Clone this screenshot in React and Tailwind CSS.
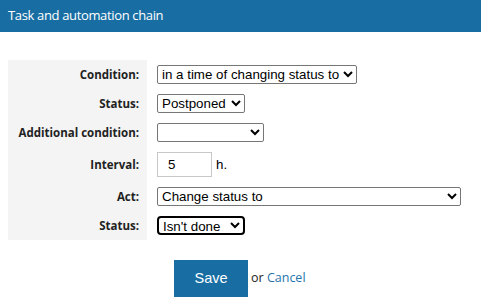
import React from 'react';

const rows = [
  { label: 'Condition:', kind: 'select', width: 'w-[200px]', value: 'in a time of changing status to' },
  { label: 'Status:', kind: 'select', width: 'w-[88px]', value: 'Postponed' },
  { label: 'Additional condition:', kind: 'select', width: 'w-[107px]', value: '' },
  { label: 'Interval:', kind: 'interval' },
  { label: 'Act:', kind: 'select', width: 'w-[304px]', value: 'Change status to' },
  { label: 'Status:', kind: 'focused', width: 'w-[88px]', value: "Isn't done" },
];

function Control({ row }) {
  if (row.kind === 'interval') {
    return (
      <div className="flex items-center gap-[4px]">
        <input
          defaultValue="5"
          className="w-[55px] h-[25px] border border-[#c8c8c8] bg-white pl-[10px] text-[13.33px] font-['Liberation_Sans',Arial,sans-serif] text-black outline-none"
        />
        <span className="text-[13.33px] font-['Liberation_Sans',Arial,sans-serif] text-black">h.</span>
      </div>
    );
  }
  const focused = row.kind === 'focused';
  return (
    <select
      defaultValue={row.value}
      className={
        row.width +
        ' h-[19px] bg-white p-0 text-[13.33px] font-[\'Liberation_Sans\',Arial,sans-serif] text-black outline-none ' +
        (focused ? 'border-2 border-black rounded-[4px]' : 'border border-[#767676] rounded-[2px]')
      }
    >
      <option value={row.value}>{row.value}</option>
    </select>
  );
}

export default function App() {
  return (
    <div className="w-[481px] h-[304px] bg-white font-['Open_Sans',sans-serif] overflow-hidden">
      {/* Title bar */}
      <div className="h-[32px] bg-[#186ea3] px-[8px] flex items-center">
        <span className="text-white text-[13px] tracking-[-0.35px]">Task and automation chain</span>
      </div>

      {/* Form */}
      <div className="mt-[28px] mx-[8px] grid grid-cols-[139px_1fr]">
        {rows.map((row, i) => (
          <React.Fragment key={i}>
            <div className="bg-[#f4f4f4] pr-[8px] flex items-center justify-end text-[11.5px] font-bold text-[#222]">
              {row.label}
            </div>
            <div className="py-[5px] pl-[10px] flex items-center">
              <Control row={row} />
            </div>
          </React.Fragment>
        ))}
      </div>

      {/* Actions */}
      <div className="mt-[20px] pl-[174px] flex items-center gap-[3px]">
        <button className="w-[74px] h-[37px] bg-[#186ea3] text-white text-[14.5px] font-['Liberation_Sans',Arial,sans-serif]">
          Save
        </button>
        <span className="text-[12.5px] text-[#222]">
          or <span className="text-[#1f74ad]">Cancel</span>
        </span>
      </div>
    </div>
  );
}
